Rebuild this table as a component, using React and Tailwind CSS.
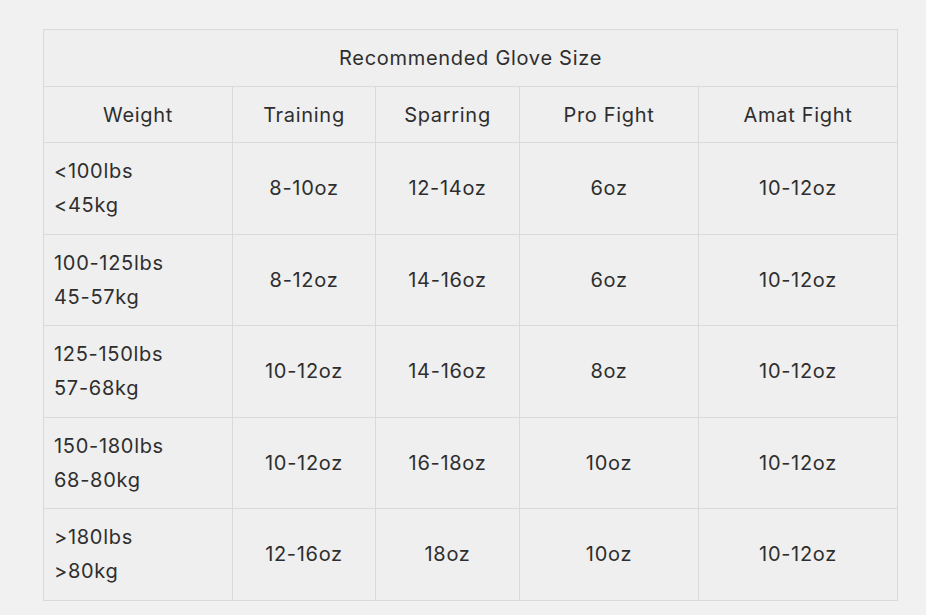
import React from "react";

const rows = [
  { lbs: "<100lbs", kg: "<45kg", training: "8-10oz", sparring: "12-14oz", pro: "6oz", amat: "10-12oz" },
  { lbs: "100-125lbs", kg: "45-57kg", training: "8-12oz", sparring: "14-16oz", pro: "6oz", amat: "10-12oz" },
  { lbs: "125-150lbs", kg: "57-68kg", training: "10-12oz", sparring: "14-16oz", pro: "8oz", amat: "10-12oz" },
  { lbs: "150-180lbs", kg: "68-80kg", training: "10-12oz", sparring: "16-18oz", pro: "10oz", amat: "10-12oz" },
  { lbs: ">180lbs", kg: ">80kg", training: "12-16oz", sparring: "18oz", pro: "10oz", amat: "10-12oz" },
];

function App() {
  return (
    <div className="min-h-[615px] bg-[#f1f1f1] pt-[29px] pl-[43px] text-[#2e2e2e] [font-family:Inter,'Liberation_Sans',sans-serif]">
      <table className="w-[854px] table-fixed border-collapse bg-[#efefef] text-[20px] tracking-[0.035em]">
        <colgroup>
          <col className="w-[189px]" />
          <col className="w-[143px]" />
          <col className="w-[144px]" />
          <col className="w-[179px]" />
          <col className="w-[199px]" />
        </colgroup>
        <thead>
          <tr className="h-[57px]">
            <th colSpan={5} className="border border-[#dadada] font-normal">Recommended Glove Size</th>
          </tr>
          <tr className="h-[56px]">
            {["Weight", "Training", "Sparring", "Pro Fight", "Amat Fight"].map((h) => (
              <th key={h} className="border border-[#dadada] font-normal">{h}</th>
            ))}
          </tr>
        </thead>
        <tbody>
          {rows.map((r) => (
            <tr key={r.lbs} className="h-[91.5px]">
              <td className="border border-[#dadada] px-[10px] leading-[34px]">
                {r.lbs}
                <br />
                {r.kg}
              </td>
              <td className="border border-[#dadada] text-center">{r.training}</td>
              <td className="border border-[#dadada] text-center">{r.sparring}</td>
              <td className="border border-[#dadada] text-center">{r.pro}</td>
              <td className="border border-[#dadada] text-center">{r.amat}</td>
            </tr>
          ))}
        </tbody>
      </table>
    </div>
  );
}

export default App;
